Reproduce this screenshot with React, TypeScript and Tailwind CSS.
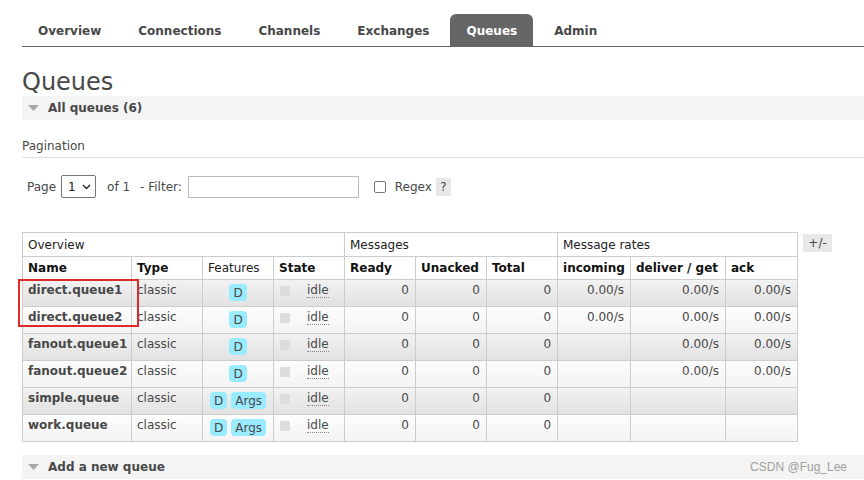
import React from 'react';

const font = { fontFamily: '"DejaVu Sans", Verdana, sans-serif' };

const tabs = ['Overview', 'Connections', 'Channels', 'Exchanges', 'Queues', 'Admin'];

type Queue = {
	name: string;
	args: boolean;
	incoming: string;
	deliver: string;
	ack: string;
};

const queues: Queue[] = [
	{ name: 'direct.queue1', args: false, incoming: '0.00/s', deliver: '0.00/s', ack: '0.00/s' },
	{ name: 'direct.queue2', args: false, incoming: '0.00/s', deliver: '0.00/s', ack: '0.00/s' },
	{ name: 'fanout.queue1', args: false, incoming: '', deliver: '0.00/s', ack: '0.00/s' },
	{ name: 'fanout.queue2', args: false, incoming: '', deliver: '0.00/s', ack: '0.00/s' },
	{ name: 'simple.queue', args: true, incoming: '', deliver: '', ack: '' },
	{ name: 'work.queue', args: true, incoming: '', deliver: '', ack: '' },
];

function Triangle() {
	return (
		<svg width="11" height="7" viewBox="0 0 11 7" className="shrink-0">
			<polygon points="0,0 11,0 5.5,6" fill="#a8a8a8" />
		</svg>
	);
}

function Section({ title, children }: { title: string; children?: React.ReactNode }) {
	return (
		<div className="flex h-[24px] items-center justify-between bg-[#f4f4f4] pl-[6px] pr-[17px]">
			<div className="flex items-center gap-[9px]">
				<Triangle />
				<span className="text-[12px] font-bold text-[#484848]">{title}</span>
			</div>
			{children}
		</div>
	);
}

function Badge({ label }: { label: string }) {
	return (
		<span className="inline-flex h-[17px] items-center rounded-[4px] bg-[#99ebff] px-[4px] pt-[1px] text-[12px] leading-none text-[#484848]">
			{label}
		</span>
	);
}

const th = 'border border-[#ccc] px-[5px] text-left text-[12px] font-bold text-[#111]';
const td = 'border border-[#ccc] px-[6px] align-top pt-[3px] text-[12px] leading-[15px] text-[#484848]';

export default function App() {
	return (
		<div className="min-h-[480px] w-[864px] bg-white pl-[22px]" style={font}>
			{/* Nav tabs */}
			<div className="flex gap-[5px] border-b border-[#666] pt-[14px]">
				{tabs.map((t) => (
					<div
						key={t}
						className={
							t === 'Queues'
								? 'flex h-[32px] items-center rounded-t-[6px] bg-[#666] px-[16px] pt-[2px] text-[12px] font-bold text-white'
								: 'flex h-[32px] items-center px-[16px] pt-[2px] text-[12px] font-bold text-[#484848]'
						}
					>
						{t}
					</div>
				))}
			</div>

			<h1 className="mt-[22px] text-[24px] leading-[27px] font-normal text-[#484848]">Queues</h1>

			<Section title="All queues (6)" />

			<div className="mt-[19px] border-b border-[#ddd] pb-[3px] text-[12px] leading-[15px] text-[#484848]">
				Pagination
			</div>

			{/* Pagination controls */}
			<div className="mt-[17px] flex h-[23px] items-center pl-[5px] text-[12px] text-[#484848]">
				<span>Page</span>
				<div className="ml-[5px] flex h-[23px] w-[35px] items-center justify-between rounded-[2px] border border-[#767676] bg-white pl-[6px] pr-[4px] text-[#222]">
					<span>1</span>
					<svg width="9" height="6" viewBox="0 0 9 6">
						<path d="M1 1 L4.5 4.5 L8 1" fill="none" stroke="#222" strokeWidth="1.4" />
					</svg>
				</div>
				<span className="ml-[11px]">of 1</span>
				<span className="ml-[10px]">- Filter:</span>
				<div className="ml-[6px] h-[22px] w-[171px] border border-[#bbb] bg-white" />
				<div className="ml-[15px] h-[12px] w-[12px] rounded-[2px] border border-[#767676] bg-white" />
				<span className="ml-[9px]">Regex</span>
				<span className="ml-[4px] flex h-[18px] w-[15px] items-center justify-center bg-[#e8e8e8] text-[#484848]">
					?
				</span>
			</div>

			{/* Queues table */}
			<div className="mt-[34px] flex items-start">
				<div className="relative">
					<table className="w-[775px] table-fixed border-collapse">
						<colgroup>
							<col className="w-[109px]" />
							<col className="w-[71px]" />
							<col className="w-[71px]" />
							<col className="w-[71px]" />
							<col className="w-[71px]" />
							<col className="w-[71px]" />
							<col className="w-[71px]" />
							<col className="w-[73px]" />
							<col className="w-[95px]" />
							<col className="w-[72px]" />
						</colgroup>
						<thead>
							<tr className="h-[24px]">
								<th colSpan={4} className="border border-[#ccc] px-[5px] text-left text-[12px] font-normal text-[#222]">
									Overview
								</th>
								<th colSpan={3} className="border border-[#ccc] px-[5px] text-left text-[12px] font-normal text-[#222]">
									Messages
								</th>
								<th colSpan={3} className="border border-[#ccc] px-[5px] text-left text-[12px] font-normal text-[#222]">
									Message rates
								</th>
							</tr>
							<tr className="h-[23px]">
								<th className={th}>Name</th>
								<th className={th}>Type</th>
								<th className="border border-[#ccc] px-[5px] text-left text-[12px] font-normal text-[#222]">Features</th>
								<th className={th}>State</th>
								<th className={th}>Ready</th>
								<th className={th}>Unacked</th>
								<th className={th}>Total</th>
								<th className={th}>incoming</th>
								<th className={th}>deliver / get</th>
								<th className={th}>ack</th>
							</tr>
						</thead>
						<tbody>
							{queues.map((q, i) => (
								<tr
									key={q.name}
									className={
										i % 2 === 0
											? 'h-[27px] bg-linear-to-b from-[#f2f2f2] to-[#e1e1e1]'
											: 'h-[27px] bg-linear-to-b from-[#fdfdfd] to-[#f3f3f3]'
									}
								>
									<td className={`${td} pl-[5px] font-bold text-[#111]`}>{q.name}</td>
									<td className={`${td} pl-[5px]`}>classic</td>
									<td className="border border-[#ccc] pt-[4px] align-top">
										<div className="flex justify-center gap-[4px]">
											<Badge label="D" />
											{q.args && <Badge label="Args" />}
										</div>
									</td>
									<td className="border border-[#ccc] pt-[3px] align-top">
										<div className="flex items-start pl-[6px]">
											<span className="mt-[3px] h-[10px] w-[10px] bg-[#ddd]" />
											<span className="ml-[17px] border-b border-dotted border-[#888] text-[12px] leading-[14px] text-[#484848]">
												idle
											</span>
										</div>
									</td>
									<td className={`${td} text-right`}>0</td>
									<td className={`${td} text-right`}>0</td>
									<td className={`${td} text-right`}>0</td>
									<td className={`${td} text-right`}>{q.incoming}</td>
									<td className={`${td} text-right`}>{q.deliver}</td>
									<td className={`${td} text-right`}>{q.ack}</td>
								</tr>
							))}
						</tbody>
					</table>
					{/* annotation box */}
					<div className="pointer-events-none absolute left-[-4px] top-[47px] h-[48px] w-[121px] border-2 border-[#e02a2a]" />
				</div>
				<div className="ml-[5px] mt-[2px] flex h-[18px] w-[29px] items-center justify-center bg-[#e8e8e8] text-[12px] text-[#484848]">
					+/-
				</div>
			</div>

			<div className="mt-[13px]">
				<Section title="Add a new queue">
					<span className="text-[12px] text-[#a0a0a0]" style={{ fontFamily: '"Liberation Sans", Arial, sans-serif' }}>
						CSDN @Fug_Lee
					</span>
				</Section>
			</div>
		</div>
	);
}
